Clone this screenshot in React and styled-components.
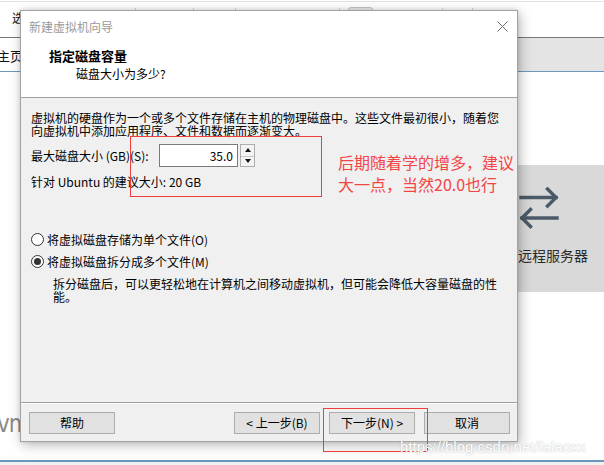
import React from "react";
import styled, { createGlobalStyle } from "styled-components";

const GlobalStyle = createGlobalStyle`
  html, body { margin: 0; padding: 0; background: #ffffff; }
  body { font-family: "Noto Sans CJK SC", "Liberation Sans", sans-serif; }
  * { box-sizing: border-box; }
`;

const CJK = `"Noto Sans CJK SC", "Liberation Sans", sans-serif`;

/* ---------- application window behind the wizard ---------- */

const Screen = styled.div`
  position: relative;
  width: 604px;
  height: 465px;
  overflow: hidden;
  background: #ffffff;
  font-family: ${CJK};
`;

const Workspace = styled.div`
  display: flex;
  flex-direction: column;
  height: 100%;
`;

const Toolbar = styled.div`
  display: flex;
  align-items: flex-start;
  height: 36px;
  margin-top: 1px;
  border-top: 1px solid #e2e2e2;
  padding-left: 12px;
`;

const MenuSlot = styled.div`
  flex: none;
  width: 111px;
  margin-top: 9px;
  font-size: 12px;
  line-height: 14px;
  color: #111;
  white-space: nowrap;
`;

const ToolSep = styled.div`
  flex: none;
  width: 1px;
  height: 24px;
  margin-top: 6px;
  margin-left: ${(p) => p.$gap}px;
  background: #d3d3d3;
`;

const ToolButton = styled.div`
  flex: none;
  width: 25px;
  height: 24px;
  margin-top: 5px;
  margin-left: ${(p) => p.$gap}px;
  border: 1px solid #c6c6c6;
  border-radius: 3px;
  background: #ececec;
`;

const ToolGlyph = styled.div`
  flex: none;
  width: ${(p) => p.$w}px;
  height: 8px;
  margin-top: 9px;
  margin-left: ${(p) => p.$gap}px;
  background: #3d4a57;
`;

const TabStrip = styled.div`
  display: flex;
  height: 35px;
  border-top: 1px solid #777;
  border-bottom: 1px solid #6d98bf;
  background: #e4e4e4;
`;

const HomeTab = styled.div`
  display: flex;
  align-items: center;
  width: 110px;
  background: #ffffff;
  font-size: 13px;
  color: #111;
  span { margin-left: -3px; margin-top: 1px; }
`;

const Content = styled.div`
  flex: 1;
  display: flex;
  flex-direction: column;
`;

const TileRow = styled.div`
  display: flex;
  margin-top: 93px;
  padding-left: 464px;
`;

const Tile = styled.div`
  flex: none;
  width: 150px;
  height: 127px;
  padding-top: 22px;
  display: flex;
  flex-direction: column;
  align-items: center;
  background: #d9d9d9;
`;

const TileCaption = styled.div`
  margin-top: 17px;
  font-size: 14px;
  line-height: 18px;
  color: #2b2b2b;
`;

const BrandMark = styled.div`
  margin-top: auto;
  margin-bottom: 24px;
  margin-left: -3px;
  font-family: "DejaVu Sans Condensed", "Liberation Sans", sans-serif;
  font-size: 24px;
  line-height: 24px;
  letter-spacing: -1px;
  color: #8a8a8a;
`;

const StatusBar = styled.div`
  height: 5px;
  border-top: 2px solid #6996bd;
  background: #f0f0f0;
`;

/* ---------- wizard dialog ---------- */

const Dialog = styled.div`
  position: absolute;
  left: 20px;
  top: 10px;
  width: 498px;
  height: 432px;
  display: flex;
  flex-direction: column;
  border: 1px solid #a3a3a3;
  background: #f0f0f0;
  box-shadow: 2px 3px 12px rgba(0, 0, 0, 0.28), 0 0 4px rgba(0, 0, 0, 0.12);
  color: #000;
  font-size: 12px;
`;

const TitleBar = styled.div`
  flex: none;
  height: 31px;
  display: flex;
  align-items: center;
  justify-content: space-between;
  padding: 0 9px 0 8px;
  background: #ffffff;
`;

const TitleText = styled.div`
  font-size: 12px;
  line-height: 16px;
  color: #9a9a9a;
`;

const Header = styled.div`
  flex: none;
  height: 56px;
  padding: 6px 0 0 28px;
  background: #ffffff;
  border-bottom: 1px solid #a0a0a0;
`;

const HeaderTitle = styled.div`
  font-size: 13px;
  font-weight: 700;
  line-height: 16px;
`;

const HeaderSub = styled.div`
  margin: 2px 0 0 27px;
  font-size: 12px;
  line-height: 16px;
`;

const Body = styled.div`
  flex: 1;
  padding: 13px 10px 0 10px;
`;

const Para = styled.p`
  margin: 0;
  line-height: 13px;
  white-space: nowrap;
`;

const SizeRow = styled.div`
  display: grid;
  grid-template-columns: 128px auto;
  align-items: center;
  margin-top: 7px;
  height: 23px;
`;

const SpinBox = styled.div`
  display: flex;
  gap: 2px;
`;

const SizeInput = styled.input`
  width: 79px;
  height: 23px;
  padding: 0 4px 0 0;
  border: 1px solid #7a7a7a;
  background: #ffffff;
  font-family: ${CJK};
  font-size: 12px;
  text-align: right;
  color: #000;
  outline: none;
`;

const Spinner = styled.div`
  width: 15px;
  height: 23px;
  display: grid;
  grid-template-rows: 1fr 1fr;
  border: 1px solid #adadad;
  background: #f3f3f3;
`;

const SpinButton = styled.div`
  display: grid;
  place-items: center;
  & + & { border-top: 1px solid #c8c8c8; }
`;

const Caret = styled.span`
  width: 0;
  height: 0;
  border-left: 3.5px solid transparent;
  border-right: 3.5px solid transparent;
  ${(p) =>
    p.$down ? "border-top: 4px solid #111;" : "border-bottom: 4px solid #111;"}
`;

const Hint = styled.div`
  margin-top: 7px;
  line-height: 16px;
`;

const Options = styled.div`
  display: flex;
  flex-direction: column;
  margin-top: 38px;
`;

const RadioRow = styled.label`
  display: flex;
  align-items: center;
  gap: 3px;
  height: 22px;
`;

const RadioMark = styled.span`
  flex: none;
  width: 13px;
  height: 13px;
  border: 1px solid #333;
  border-radius: 50%;
  background: #ffffff;
  display: grid;
  place-items: center;
  &::after {
    content: "";
    width: 7px;
    height: 7px;
    border-radius: 50%;
    background: ${(p) => (p.$checked ? "#333" : "transparent")};
  }
`;

const OptionNote = styled.p`
  margin: 5px 0 0 22px;
  line-height: 13px;
  white-space: nowrap;
`;

const Footer = styled.div`
  flex: none;
  height: 39px;
  display: flex;
  align-items: center;
  padding: 2px 7px 0 8px;
  border-top: 1px solid #a0a0a0;
  box-shadow: inset 0 1px 0 #ffffff;
`;

const NavGroup = styled.div`
  display: flex;
  gap: 9px;
  margin-left: auto;
`;

const Button = styled.button`
  width: 86px;
  height: 22px;
  padding: 0;
  border: 1px solid #adadad;
  background: #e1e1e1;
  font-family: ${CJK};
  font-size: 12px;
  line-height: 18px;
  color: #000;
`;

/* ---------- red markup drawn over the screen ---------- */

const MarkFrame = styled.div`
  position: absolute;
  left: ${(p) => p.$x}px;
  top: ${(p) => p.$y}px;
  width: ${(p) => p.$w}px;
  height: ${(p) => p.$h}px;
  border: 1px solid #ee3d3d;
  pointer-events: none;
`;

const MarkNote = styled.div`
  position: absolute;
  left: 338px;
  top: 151px;
  font-size: 16px;
  line-height: 22px;
  color: #f24545;
  white-space: nowrap;
`;

const Watermark = styled.div`
  position: absolute;
  left: 400px;
  top: 439px;
  font-family: "Liberation Sans", sans-serif;
  font-size: 15px;
  line-height: 15px;
  color: #ffffff;
  text-shadow: 0 0 1.5px rgba(0, 0, 0, 0.3);
  white-space: nowrap;
`;

const toolItems = [
  { kind: "sep", gap: 12 },
  { kind: "sep", gap: 57 },
  { kind: "sep", gap: 41 },
  { kind: "sep", gap: 103 },
  { kind: "btn", gap: 8 },
  { kind: "glyph", gap: 39, w: 6 },
  { kind: "glyph", gap: 6, w: 6 },
  { kind: "sep", gap: 12 },
  { kind: "sep", gap: 29 },
  { kind: "glyph", gap: 12, w: 18 },
];

function SwapArrows() {
  return (
    <svg width="42" height="42" viewBox="0 0 42 42" fill="none">
      <g stroke="#4b5a68" strokeWidth="3.4" strokeLinecap="square">
        <path d="M3 10.5H38" />
        <path d="M29.5 2L38 10.5L29.5 19" />
        <path d="M4 31H39" />
        <path d="M12.5 22.5L4 31L12.5 39.5" />
      </g>
    </svg>
  );
}

function CloseGlyph() {
  return (
    <svg width="11" height="11" viewBox="0 0 11 11">
      <path d="M0.5 0.5L10.5 10.5M10.5 0.5L0.5 10.5" stroke="#6e6e6e" strokeWidth="1" />
    </svg>
  );
}

export default function App() {
  return (
    <Screen>
      <GlobalStyle />
      <Workspace>
        <Toolbar>
          <MenuSlot>选</MenuSlot>
          {toolItems.map((it, i) =>
            it.kind === "sep" ? (
              <ToolSep key={i} $gap={it.gap} />
            ) : it.kind === "btn" ? (
              <ToolButton key={i} $gap={it.gap} />
            ) : (
              <ToolGlyph key={i} $gap={it.gap} $w={it.w} />
            )
          )}
        </Toolbar>
        <TabStrip>
          <HomeTab>
            <span>主页</span>
          </HomeTab>
        </TabStrip>
        <Content>
          <TileRow>
            <Tile>
              <SwapArrows />
              <TileCaption>连接远程服务器</TileCaption>
            </Tile>
          </TileRow>
          <BrandMark>vm</BrandMark>
        </Content>
        <StatusBar />
      </Workspace>

      <Dialog>
        <TitleBar>
          <TitleText>新建虚拟机向导</TitleText>
          <CloseGlyph />
        </TitleBar>
        <Header>
          <HeaderTitle>指定磁盘容量</HeaderTitle>
          <HeaderSub>磁盘大小为多少?</HeaderSub>
        </Header>
        <Body>
          <Para>
            虚拟机的硬盘作为一个或多个文件存储在主机的物理磁盘中。这些文件最初很小，随着您
            <br />
            向虚拟机中添加应用程序、文件和数据而逐渐变大。
          </Para>
          <SizeRow>
            <span>最大磁盘大小 (GB)(S):</span>
            <SpinBox>
              <SizeInput value="35.0" readOnly />
              <Spinner>
                <SpinButton>
                  <Caret />
                </SpinButton>
                <SpinButton>
                  <Caret $down />
                </SpinButton>
              </Spinner>
            </SpinBox>
          </SizeRow>
          <Hint>针对 Ubuntu 的建议大小: 20 GB</Hint>
          <Options>
            <RadioRow>
              <RadioMark />
              将虚拟磁盘存储为单个文件(O)
            </RadioRow>
            <RadioRow>
              <RadioMark $checked />
              将虚拟磁盘拆分成多个文件(M)
            </RadioRow>
            <OptionNote>
              拆分磁盘后，可以更轻松地在计算机之间移动虚拟机，但可能会降低大容量磁盘的性
              <br />
              能。
            </OptionNote>
          </Options>
        </Body>
        <Footer>
          <Button>帮助</Button>
          <NavGroup>
            <Button>&lt; 上一步(B)</Button>
            <Button>下一步(N) &gt;</Button>
            <Button>取消</Button>
          </NavGroup>
        </Footer>
      </Dialog>

      <MarkFrame $x={130} $y={136} $w={192} $h={61} />
      <MarkNote>
        后期随着学的增多，建议
        <br />
        大一点，当然20.0也行
      </MarkNote>
      <MarkFrame $x={323} $y={408} $w={105} $h={44} />
      <Watermark>https://blog.csdn.net/falaoxx</Watermark>
    </Screen>
  );
}
